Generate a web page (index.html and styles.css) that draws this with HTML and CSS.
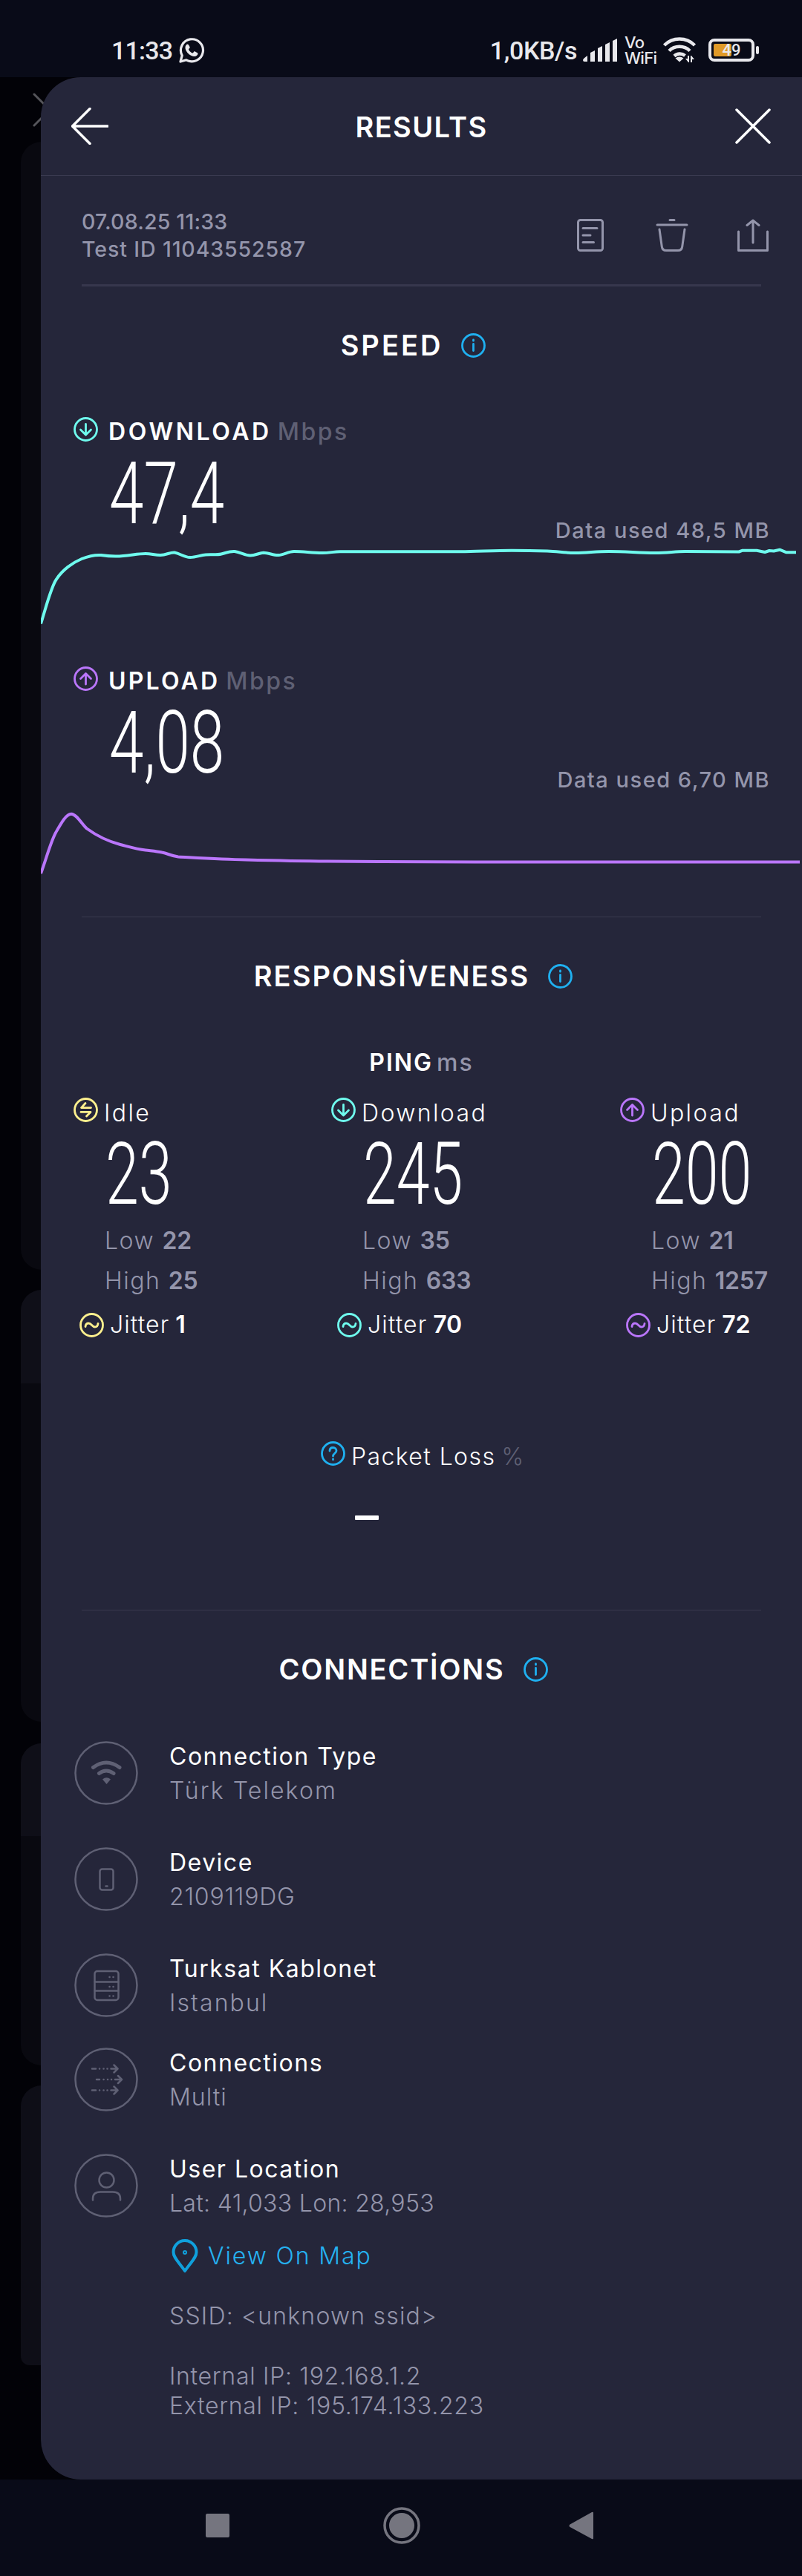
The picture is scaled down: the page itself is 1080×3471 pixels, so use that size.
FILE: index.html
```
<!DOCTYPE html>
<html lang="en">

<head>
    <meta charset="UTF-8">
    <title>Results</title>
    <link rel="stylesheet" href="styles.css">
</head>

<body>
    <!-- shared icons -->
    <svg width="0" height="0" class="sprite">
        <symbol id="i-info" viewBox="0 0 33 33">
            <circle cx="16.5" cy="16.5" r="15" />
            <path d="M16.5 14.5v9M16.5 9v1.2" />
        </symbol>
        <symbol id="i-down" viewBox="0 0 33 33">
            <circle cx="16.5" cy="16.5" r="15" />
            <path d="M16.5 9.5v14M9.5 17l7 7 7-7" />
        </symbol>
        <symbol id="i-up" viewBox="0 0 33 33">
            <circle cx="16.5" cy="16.5" r="15" />
            <path d="M16.5 24v-14M9.5 16.5l7-7 7 7" />
        </symbol>
        <symbol id="i-idle" viewBox="0 0 33 33">
            <circle cx="16.5" cy="16.5" r="15" />
            <path d="M23.5 13.6H10.5L16 7.5M10 19.4H23L17.5 25" />
        </symbol>
        <symbol id="i-jitter" viewBox="0 0 33 33">
            <circle cx="16.5" cy="16.5" r="15" />
            <path d="M8 18.5c.3-3 2-4.5 4.3-4.5 4 0 4.6 5 8.4 5 2.3 0 4-1.8 4.3-4.7" />
        </symbol>
        <symbol id="i-question" viewBox="0 0 33 33">
            <circle cx="16.5" cy="16.5" r="15" />
            <path d="M12 13c0-2.8 1.9-4.5 4.5-4.5s4.5 1.7 4.5 4.2c0 3.5-4.5 3.7-4.5 7.3M16.5 24v.8" />
        </symbol>
    </svg>

    <div class="status-bar">
        <div class="status-left">
            <span>11:33</span>
            <svg width="36" height="36" viewBox="0 0 36 36">
                <path class="line" d="M3 33l2.2-8.2A15 15 0 1 1 11 30.8z" />
                <path d="M12.4 9.5c-.8 0-2.9 1.5-2.9 4.5 0 5.5 6.5 12 12 12 3 0 5-2 5-4 0-.7-4-2.8-4.7-2.8-.9 0-1.5 2.3-2.5 2.3-1.5 0-5.3-3.6-5.3-5 0-.7 1.7-1.7 1.7-2.5 0-.7-1.7-4.5-3.3-4.5z" />
            </svg>
        </div>
        <div class="status-right">
            <span class="rate">1,0KB/s</span>
            <svg class="signal" width="49" height="32" viewBox="0 0 49 32">
                <path d="M1 29q0-2 6-6v8H3q-2 0-2-2zM11 19l6-3v15h-6zM21 13l6-3v21h-6zM31 8l6-3v26h-6zM41 3l6-3v31h-6z" />
            </svg>
            <span class="vowifi"><i>Vo</i><i>WiFi</i></span>
            <svg class="wifi" width="48" height="36" viewBox="0 0 48 36">
                <path class="line" d="M2.5 12a29 29 0 0 1 41 0M9 19.5a20 20 0 0 1 28 0M16 26.5a11 11 0 0 1 14.5-.5" />
                <path d="M17.5 29.5q5.5-4 11 0L23 34.5zM35 35l-4-5h3v-4h2v9zM39 26l4 5h-3v4h-2v-9z" />
            </svg>
            <svg class="battery" width="68" height="32" viewBox="0 0 68 32">
                <rect class="line" x="2" y="2" width="58" height="27" rx="6" />
                <rect x="64" y="10" width="4" height="11" rx="2" />
                <rect class="charge" x="7" y="7" width="24" height="17" rx="2" />
                <text x="31" y="23" text-anchor="middle">49</text>
            </svg>
        </div>
    </div>

    <div class="stage">
        <div class="backdrop">
            <svg class="ghost-close" width="50" height="50" viewBox="0 0 50 50">
                <path d="M2 4l42 42M44 4L2 46" />
            </svg>
            <div class="card card-a"></div>
            <div class="card card-b"></div>
            <div class="card card-c"></div>
            <div class="card card-d"></div>
        </div>

        <main class="panel">
            <header class="panel-head">
                <svg width="50" height="50" viewBox="0 0 50 50">
                    <path d="M49 25H2M25 1.5L1.5 25 25 48.5" />
                </svg>
                <h1>RESULTS</h1>
                <svg width="50" height="50" viewBox="0 0 50 50">
                    <path d="M3 3l44 44M47 3L3 47" />
                </svg>
            </header>

            <div class="meta">
                <div class="meta-text">
                    <div>07.08.25 11:33</div>
                    <div class="test-id">Test ID 11043552587</div>
                </div>
                <div class="actions">
                    <svg width="44" height="44" viewBox="0 0 44 44">
                        <rect x="5.5" y="1.5" width="33" height="41" rx="3" />
                        <path d="M12 12.5h19M12 22h10M12 31.5h14.5" />
                    </svg>
                    <svg width="44" height="44" viewBox="0 0 44 44">
                        <path d="M19 1.5h6M2 8h40M5 14l3.3 23.5q.7 5 5.7 5h16q5 0 5.7-5L39 14" />
                    </svg>
                    <svg width="44" height="44" viewBox="0 0 44 44">
                        <path d="M2.5 17v25.5h39V17M22 32V2.5M14 8.5l8-6.5 8 6.5" />
                    </svg>
                </div>
            </div>
            <div class="divider thick"></div>

            <h2><span class="t-speed">SPEED</span><svg class="icon blue"><use href="#i-info" /></svg></h2>

            <section class="speed download">
                <div class="speed-label">
                    <svg class="icon cyan"><use href="#i-down" /></svg>
                    <b>DOWNLOAD</b><span class="unit">Mbps</span>
                </div>
                <div class="speed-row">
                    <div class="number">47,4</div>
                    <div class="used">Data used 48,5 MB</div>
                </div>
                <svg class="chart cyan" width="1025" height="130" viewBox="55 730 1025 130">
                    <path d="M55 840.5C62 818 69 790 76 780.5C84 768 98 758 110 753C120 749 128 747.5 136 748C146 749.5 156 750 166 749C178 748 186 746 196 746C204 746 208 748 216 748C224 748 229 744 235 744.5C243 746 248 751 256 751C264 751 270 748 277 747.5C285 747 292 748 298 746.5C304 745 310 742.5 316 743C324 744 330 748.5 337 748.5C344 748.5 349 745 355 744.7C362 745 369 748.5 375 748C382 747.5 389 743 396 743C409 743 420 745 434 745C444 745 449 743.3 458 743.3H620C645 743 665 741.7 689 741.7C708 741.7 722 742 737 742.5C752 743 760 745 775 745C790 745 803 743 820 743C843 743 860 745 882 745C900 745 908 743 923 743L995 743.5L1000 741.7H1019L1030 744L1036 742L1042 742.5L1050 740.7L1059 744.3H1072" />
                </svg>
            </section>

            <section class="speed upload">
                <div class="speed-label">
                    <svg class="icon purple"><use href="#i-up" /></svg>
                    <b>UPLOAD</b><span class="unit">Mbps</span>
                </div>
                <div class="speed-row">
                    <div class="number">4,08</div>
                    <div class="used">Data used 6,70 MB</div>
                </div>
                <svg class="chart purple" width="1025" height="130" viewBox="55 1066 1025 130">
                    <path d="M55 1177C62 1158 68 1135 75 1122C83 1108 89 1097 96 1096.7C103 1097 110 1110 117 1116.5C130 1126 147 1134 162 1138C174 1141 184 1144 196 1145.5C204 1146.5 211 1147 218 1148.5C226 1150 231 1153.5 240 1154.5C268 1156 300 1158 331 1158.5C368 1159.5 400 1160.3 441 1160.5L517 1161L640 1161.5H1077" />
                </svg>
            </section>
            <div class="divider"></div>

            <h2><span class="t-resp">RESPONSİVENESS</span><svg class="icon blue"><use href="#i-info" /></svg></h2>
            <div class="ping-title"><b>PING</b><span>ms</span></div>

            <section class="pings">
                <div class="ping">
                    <div class="ping-label"><svg class="icon yellow"><use href="#i-idle" /></svg>Idle</div>
                    <div class="number">23</div>
                    <div class="range">Low <b>22</b></div>
                    <div class="range">High <b>25</b></div>
                    <div class="jitter"><svg class="icon yellow"><use href="#i-jitter" /></svg>Jitter <b>1</b></div>
                </div>
                <div class="ping">
                    <div class="ping-label"><svg class="icon cyan"><use href="#i-down" /></svg>Download</div>
                    <div class="number">245</div>
                    <div class="range">Low <b>35</b></div>
                    <div class="range">High <b>633</b></div>
                    <div class="jitter"><svg class="icon cyan"><use href="#i-jitter" /></svg>Jitter <b>70</b></div>
                </div>
                <div class="ping">
                    <div class="ping-label"><svg class="icon purple"><use href="#i-up" /></svg>Upload</div>
                    <div class="number">200</div>
                    <div class="range">Low <b>21</b></div>
                    <div class="range">High <b>1257</b></div>
                    <div class="jitter"><svg class="icon purple"><use href="#i-jitter" /></svg>Jitter <b>72</b></div>
                </div>
            </section>

            <section class="loss">
                <div class="loss-label">
                    <svg class="icon blue"><use href="#i-question" /></svg>
                    <span>Packet Loss</span><span class="percent">%</span>
                </div>
                <div class="dash"></div>
            </section>
            <div class="divider"></div>

            <h2><span class="t-conn">CONNECTİONS</span><svg class="icon blue"><use href="#i-info" /></svg></h2>

            <section class="connections">
                <div class="row">
                    <svg class="round" viewBox="0 0 86 86">
                        <circle cx="43" cy="43" r="41.5" />
                        <path class="bold" d="M25.5 35.5q17.5-13 35.5 0M33.5 43.5q9.5-7 19.5 0" />
                        <path class="solid" d="M38 51.5q5.5-4.5 11 0L43.5 58z" />
                    </svg>
                    <div class="row-text">
                        <div class="name">Connection Type</div>
                        <div class="value w-turk">Türk Telekom</div>
                    </div>
                </div>
                <div class="row">
                    <svg class="round" viewBox="0 0 86 86">
                        <circle cx="43" cy="43" r="41.5" />
                        <rect x="34.5" y="29.5" width="18" height="28" rx="3" />
                        <path d="M42.5 52.5h2" />
                    </svg>
                    <div class="row-text">
                        <div class="name">Device</div>
                        <div class="value w-device">2109119DG</div>
                    </div>
                </div>
                <div class="row">
                    <svg class="round" viewBox="0 0 86 86">
                        <circle cx="43" cy="43" r="41.5" />
                        <rect x="27.5" y="24" width="32" height="39" rx="3.5" />
                        <path d="M27.5 38.5h32M27.5 50.5h32" />
                        <path class="dots" d="M47.5 32h.1M52.5 32h.1M47.5 45h.1M52.5 45h.1M47.5 57.5h.1M52.5 57.5h.1" />
                    </svg>
                    <div class="row-text">
                        <div class="name">Turksat Kablonet</div>
                        <div class="value w-turk">Istanbul</div>
                    </div>
                </div>
                <div class="row">
                    <svg class="round" viewBox="0 0 86 86">
                        <circle cx="43" cy="43" r="41.5" />
                        <path d="M24 28.5h5M49.5 28.5h8M53.5 23.5l5 5-5 5M30 43h4M55 43h8M59 38l5 5-5 5M24 57.5h5M49.5 57.5h8M53.5 52.5l5 5-5 5" />
                        <path class="dots" d="M34 28.5h.1M39.5 28.5h.1M44.5 28.5h.1M39.5 43h.1M45 43h.1M50 43h.1M34 57.5h.1M39.5 57.5h.1M44.5 57.5h.1" />
                    </svg>
                    <div class="row-text">
                        <div class="name">Connections</div>
                        <div class="value">Multi</div>
                    </div>
                </div>
                <div class="row">
                    <svg class="round" viewBox="0 0 86 86">
                        <circle cx="43" cy="43" r="41.5" />
                        <circle cx="43.5" cy="35.5" r="10" />
                        <path d="M25 62.5v-2q0-9 10-9h17q10 0 10 9v2" />
                    </svg>
                    <div class="row-text">
                        <div class="name">User Location</div>
                        <div class="value w-lat">Lat: 41,033 Lon: 28,953</div>
                        <div class="map-link">
                            <svg width="36" height="46" viewBox="0 0 36 46">
                                <path d="M18 43C10 31 2.5 25.5 2.5 17.5a15.5 15.5 0 0 1 31 0C33.5 25.5 26 31 18 43z" />
                                <circle cx="18" cy="18" r="1" />
                            </svg>
                            <span>View On Map</span>
                        </div>
                        <div class="net ssid">SSID: &lt;unknown ssid&gt;</div>
                        <div class="net">Internal IP: 192.168.1.2</div>
                        <div class="net">External IP: 195.174.133.223</div>
                    </div>
                </div>
            </section>
        </main>
    </div>

    <nav class="nav-bar">
        <svg width="50" height="50" viewBox="0 0 50 50"><rect x="9" y="9" width="32" height="32" rx="2" /></svg>
        <svg width="50" height="50" viewBox="0 0 50 50">
            <circle class="ring" cx="25" cy="25" r="23" />
            <circle cx="25" cy="25" r="17" />
        </svg>
        <svg width="50" height="50" viewBox="0 0 50 50"><path d="M9.5 23.5L39 7q2-1 2 1v34q0 2-2 1L9.5 27q-2-1.5 0-3.5z" /></svg>
    </nav>
</body>

</html>
```
FILE: styles.css
```
* {
    box-sizing: border-box;
}

body {
    margin: 0;
    width: 1080px;
    background: #090b18;
    color: #fff;
    font-family: Inter, "Open Sans", sans-serif;
    font-size: 32px;
    font-weight: 400;
}

svg {
    display: block;
    flex: none;
    fill: none;
    stroke: currentColor;
    stroke-width: 3;
    stroke-linecap: round;
    stroke-linejoin: round;
}

.sprite {
    position: absolute;
}

h1,
h2 {
    margin: 0;
    font-size: 38px;
    font-weight: 600;
    white-space: nowrap;
}

/* status bar */

.status-bar {
    height: 104px;
    padding: 48px 58px 0 150px;
    display: flex;
    justify-content: space-between;
    align-items: flex-start;
    font-family: Roboto, sans-serif;
    font-size: 34px;
    font-weight: 500;
    line-height: 40px;
    color: #e8e8ec;
}

.status-left,
.status-right {
    display: flex;
    align-items: flex-start;
}

.status-left {
    letter-spacing: -0.8px;
}

.rate {
    letter-spacing: -0.4px;
}

.status-bar svg {
    fill: currentColor;
    stroke: none;
    margin-top: 2px;
}

.status-bar .line {
    fill: none;
    stroke: currentColor;
    stroke-width: 3.2;
}

.status-left svg {
    margin-left: 8px;
}

.status-right .signal {
    margin: 4px 8px 0 7px;
}

.status-right .wifi {
    margin: 1px 14px 0 9px;
}

.wifi .line {
    stroke-width: 4.5;
    stroke-linecap: butt;
}

.status-right .battery {
    margin-top: 4px;
}

.battery .line {
    stroke-width: 4;
}

.vowifi {
    width: 42px;
    margin-top: -1px;
    display: flex;
    flex-direction: column;
    font-family: Inter, sans-serif;
    font-size: 22px;
    font-weight: 500;
    line-height: 21px;
    letter-spacing: -0.7px;
}

.vowifi i {
    font-style: normal;
}

.status-bar .charge {
    fill: #e09a28;
}

.battery text {
    font-size: 22px;
    font-weight: 500;
    letter-spacing: 0;
}

/* stage: dimmed screen with the panel over it */

.stage {
    display: grid;
    height: 3237px;
}

.stage > * {
    grid-area: 1 / 1;
}

.backdrop {
    background: #020207;
    padding-left: 28px;
}

.ghost-close {
    margin: 19px 0 18px 16px;
    color: #55555a;
}

.card {
    width: 100px;
    background: #090910;
    border-radius: 28px;
}

.card-a {
    height: 1520px;
}

.card-b {
    height: 582px;
    margin-top: 27px;
    background: linear-gradient(#0f0f18 126px, #090910 126px);
}

.card-c {
    height: 434px;
    margin-top: 29px;
    background: linear-gradient(#0f0f18 125px, #090910 125px);
}

.card-d {
    height: 377px;
    margin-top: 27px;
    background: #0e0e17;
    border-radius: 28px 0 0 12px;
}

.panel {
    margin-left: 55px;
    background: #25263a;
    border-radius: 54px 0 0 54px;
}

.panel-head {
    height: 133px;
    padding: 0 41px;
    display: flex;
    align-items: center;
    justify-content: space-between;
    border-bottom: 1px solid #3a3a50;
}

.panel-head h1 {
    padding-top: 1px;
    letter-spacing: 1.4px;
}

.panel-head svg {
    stroke-width: 3.5;
}

.meta {
    height: 146px;
    padding: 43px 44px 29px 55px;
    display: flex;
    justify-content: space-between;
    align-items: center;
    color: #9495ab;
}

.meta-text {
    font-size: 28.5px;
    font-weight: 500;
    line-height: 37px;
    letter-spacing: 0.2px;
}

.test-id {
    letter-spacing: 0.9px;
}

.actions {
    display: flex;
    gap: 65.5px;
}

.divider {
    height: 1px;
    margin: 39px 55px 0;
    background: #39394e;
}

.divider.thick {
    height: 3px;
    margin-top: 0;
    background: #37374d;
}

h2 {
    height: 60px;
    margin-top: 49px;
    padding-right: 22px;
    display: flex;
    align-items: center;
    justify-content: center;
    gap: 25px;
    line-height: 60px;
}

.t-speed {
    letter-spacing: 3px;
}

.t-resp {
    letter-spacing: 2.1px;
}

.t-conn {
    letter-spacing: 1.8px;
}

.icon {
    width: 33px;
    height: 33px;
    stroke-width: 2.8;
}

.cyan {
    color: #6ffbee;
}

.purple {
    color: #ba76fb;
}

.yellow {
    color: #fdf08e;
}

.blue {
    color: #1fb0f0;
}

/* speed */

.download {
    margin-top: 67px;
}

.upload {
    margin-top: 38px;
}

.speed-label {
    height: 40px;
    padding-left: 44px;
    display: flex;
    line-height: 40px;
}

.speed-label b {
    margin: 0 8px 0 14px;
    font-weight: 600;
    letter-spacing: 3.6px;
}

.upload b {
    letter-spacing: 3.2px;
}

.unit {
    font-weight: 500;
    letter-spacing: 2.5px;
    color: #5f6074;
}

.speed-row {
    height: 117px;
    margin-top: 11px;
    padding: 0 43px 0 92px;
    display: flex;
    justify-content: space-between;
}

.number {
    width: 150px;
    height: 100px;
    font-family: Roboto, sans-serif;
    font-size: 117px;
    font-weight: 300;
    line-height: 104px;
    white-space: nowrap;
    transform: scaleX(0.69);
    transform-origin: left;
}

.speed .number {
    transform: scaleX(0.715);
}

.used {
    align-self: flex-end;
    font-size: 29px;
    font-weight: 500;
    line-height: 31px;
    letter-spacing: 1.5px;
    color: #9495ab;
}

.chart {
    stroke-width: 4;
    stroke-linecap: butt;
}

/* ping */

.ping-title {
    margin-top: 67px;
    display: flex;
    justify-content: center;
    gap: 5px;
    line-height: 40px;
    letter-spacing: 2px;
}

.ping-title b {
    font-weight: 600;
}

.ping-title span {
    font-weight: 500;
    color: #9495ab;
}

.pings {
    margin-top: 27px;
    padding-left: 44px;
    display: grid;
    grid-template-columns: 347px 389px 200px;
    white-space: nowrap;
}

.ping-label {
    height: 40px;
    display: flex;
    gap: 8px;
    line-height: 42px;
    font-weight: 350;
    letter-spacing: 2.4px;
}

.ping .number {
    margin: 11px 0 15px 43px;
}

.range {
    padding-left: 42px;
    line-height: 54px;
    font-weight: 300;
    letter-spacing: 1.5px;
    color: #9495ab;
}

.range b,
.jitter b {
    font-weight: 600;
    letter-spacing: -0.2px;
}

.jitter {
    margin: 12px 0 0 8px;
    display: flex;
    align-items: center;
    gap: 8px;
    line-height: 40px;
    font-weight: 350;
    letter-spacing: 1.1px;
}

.loss {
    padding-left: 377px;
    margin-top: 137px;
}

.loss-label {
    height: 40px;
    display: flex;
    line-height: 42px;
    letter-spacing: 1.4px;
    font-weight: 350;
}

.loss-label span {
    margin-left: 8px;
}

.loss-label .percent {
    color: #5f6074;
}

.dash {
    width: 32px;
    height: 6px;
    margin: 60px 0 121px 46px;
    border-radius: 1px;
    background: #fff;
}

.loss + .divider {
    margin-top: 0;
}

/* connections */

.connections {
    margin-top: 67px;
    padding-left: 45px;
}

.row {
    height: 86px;
    margin-bottom: 57px;
    display: flex;
    gap: 42px;
}

.row:nth-child(3) {
    margin-bottom: 41px;
}

.round {
    width: 86px;
    height: 86px;
    color: #5f6074;
    stroke-width: 2.5;
}

.round .bold {
    stroke-width: 5;
}

.round .solid {
    fill: currentColor;
    stroke: none;
}

.row-text {
    margin-top: -2px;
    line-height: 46px;
    white-space: nowrap;
}

.name {
    letter-spacing: 1.5px;
}

.value,
.net {
    font-weight: 300;
    letter-spacing: 1px;
    color: #9495ab;
}

.w-turk {
    letter-spacing: 2.1px;
}

.w-device {
    letter-spacing: 0.8px;
}

.w-lat {
    letter-spacing: 0.3px;
}

.map-link {
    margin-top: 25px;
    display: flex;
    gap: 13px;
    color: #25b2f1;
    font-weight: 350;
    letter-spacing: 1.9px;
}

.map-link svg {
    margin-left: 3px;
    stroke-width: 4;
    color: #10a0dc;
}

.net {
    line-height: 40px;
    letter-spacing: 0.7px;
}

.ssid {
    margin: 38px 0 41px;
    letter-spacing: 1.2px;
}

/* system navigation */

.nav-bar {
    height: 130px;
    padding: 37px 272px 0 268px;
    display: flex;
    justify-content: space-between;
    color: #75757f;
}

.nav-bar svg {
    fill: currentColor;
    stroke: none;
}

.nav-bar svg:nth-child(2) {
    margin-left: 5px;
}

.nav-bar .ring {
    fill: none;
    stroke: currentColor;
    stroke-width: 3.5;
}
```
